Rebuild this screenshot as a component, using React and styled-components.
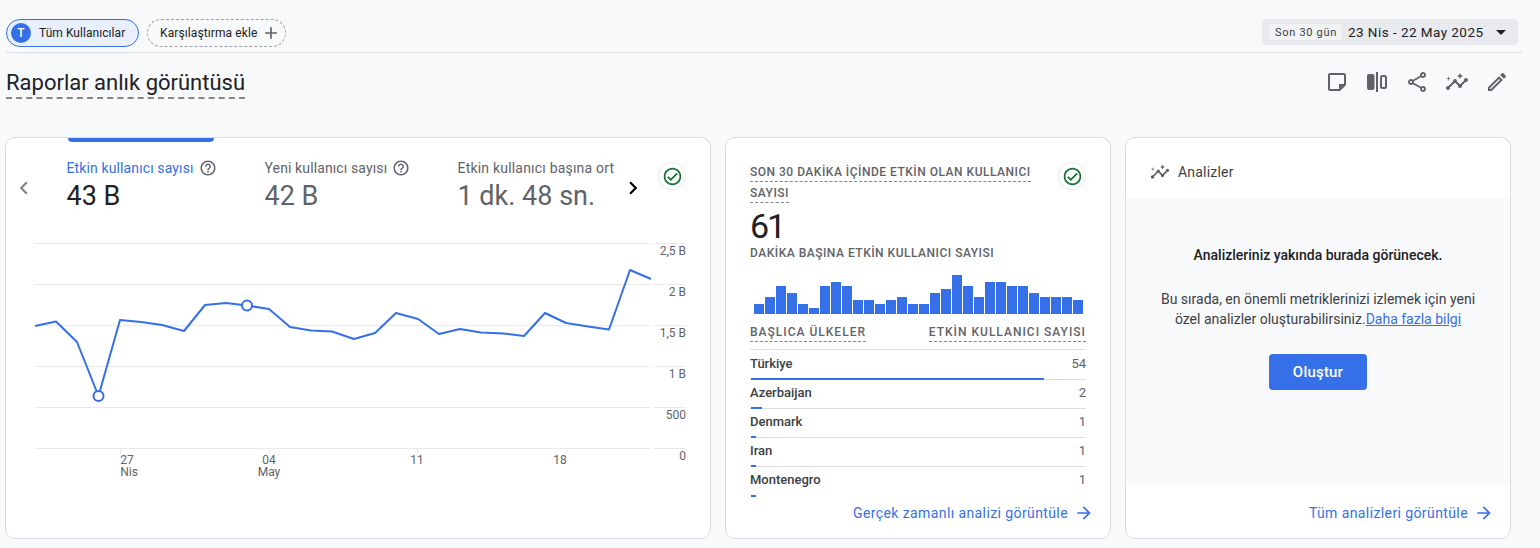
import styled, { createGlobalStyle } from "styled-components"
import {
  MdAdd,
  MdArrowDropDown,
  MdArrowForward,
  MdChevronLeft,
  MdChevronRight,
  MdInsights,
  MdOutlineCheckCircle,
  MdOutlineEdit,
  MdOutlineHelpOutline,
  MdOutlineShare,
} from "react-icons/md"

const BLUE = "#3570e8"
const GREY = "#5f6368"
const INK = "#202124"

const GlobalStyle = createGlobalStyle`
  html, body {
    margin: 0;
    background: #f8f9fb;
    font-family: Roboto, "Liberation Sans", sans-serif;
    color: ${INK};
  }
`

const Page = styled.div`
  width: 1540px;
  height: 548px;
  overflow: hidden;
  box-sizing: border-box;
  padding-top: 19px;
`

const TopBar = styled.div`
  display: flex;
  align-items: flex-start;
  justify-content: space-between;
  width: 1516px;
  height: 34px;
  margin-left: 6px;
  padding-right: 4px;
  box-sizing: border-box;
  border-bottom: 1px solid #dadce0;
`

const Chips = styled.div`
  display: flex;
  gap: 8px;
`

const UserChip = styled.div`
  display: flex;
  align-items: center;
  gap: 8px;
  width: 133px;
  height: 28px;
  box-sizing: border-box;
  padding-left: 4px;
  background: #e8f0fe;
  border: 1px solid ${BLUE};
  border-radius: 14px;
  font-size: 12px;
  letter-spacing: 0.05px;
`

const Avatar = styled.span`
  display: flex;
  align-items: center;
  justify-content: center;
  width: 20px;
  height: 20px;
  border-radius: 50%;
  background: ${BLUE};
  color: #fff;
  font-size: 12px;
  font-weight: 500;
`

const CompareChip = styled.div`
  display: flex;
  align-items: center;
  gap: 4px;
  width: 139px;
  height: 28px;
  box-sizing: border-box;
  padding-left: 12px;
  border: 1px dashed #9aa0a6;
  border-radius: 14px;
  font-size: 12px;
  letter-spacing: 0.1px;
  color: ${GREY};

  span {
    color: ${INK};
  }
`

const DateRange = styled.div`
  display: flex;
  align-items: center;
  width: 256px;
  height: 26px;
  box-sizing: border-box;
  padding-left: 8px;
  background: #e8eaed;
  border-radius: 4px;
  color: ${INK};
`

const DateLabel = styled.span`
  display: flex;
  align-items: center;
  justify-content: center;
  width: 72px;
  height: 16px;
  margin-right: 6px;
  background: #f1f3f4;
  color: #3c4043;
  font-size: 11px;
  letter-spacing: 0.7px;
`

const DateValue = styled.span`
  font-size: 13.5px;
  letter-spacing: 0.45px;
  white-space: nowrap;
`

const Caret = styled.span`
  display: flex;
  margin-left: 6px;
  font-size: 24px;
`

const TitleRow = styled.div`
  display: flex;
  align-items: flex-start;
  justify-content: space-between;
  height: 84px;
  margin-left: 6px;
  width: 1503px;
`

const Title = styled.h1`
  margin: 15px 0 0;
  font-size: 22px;
  font-weight: 400;
  line-height: 29px;
  border-bottom: 2px dashed #80868b;
`

const Actions = styled.div`
  display: flex;
  gap: 16px;
  margin-top: 17px;
  color: ${GREY};
  font-size: 24px;

  svg {
    display: block;
  }
`

const Cards = styled.div`
  display: flex;
  gap: 14px;
  margin-left: 5px;
`

const Card = styled.section`
  position: relative;
  display: flex;
  flex-direction: column;
  width: ${(p) => p.$width}px;
  height: 402px;
  box-sizing: border-box;
  background: #fff;
  border: 1px solid #dadce0;
  border-radius: 10px;
  overflow: hidden;
`

const MetricsHeader = styled.div`
  display: flex;
  align-items: flex-start;
  height: 100px;
`

const Nav = styled.span`
  display: flex;
  flex: none;
  justify-content: ${(p) => (p.$left ? "flex-start" : "center")};
  width: ${(p) => (p.$left ? "60.5px" : "26px")};
  padding-left: ${(p) => (p.$left ? "4.5px" : "0")};
  margin-top: 37px;
  box-sizing: border-box;
  font-size: 26px;
  color: ${(p) => (p.$left ? "#80868b" : "#000")};
`

const Metric = styled.div`
  position: relative;
  width: ${(p) => p.$width}px;
  flex: none;
  padding-top: 21px;
  color: ${(p) => (p.$active ? INK : GREY)};

  &::before {
    content: "";
    display: ${(p) => (p.$active ? "block" : "none")};
    position: absolute;
    top: -1px;
    left: 1px;
    width: 146px;
    height: 5px;
    background: ${BLUE};
    border-radius: 0 0 4px 4px;
  }
`

const MetricLabel = styled.div`
  display: flex;
  align-items: center;
  gap: 5px;
  height: 18px;
  font-size: 14px;
  letter-spacing: ${(p) => (p.$wide ? "0.2px" : "0.12px")};
  white-space: nowrap;
  color: ${(p) => (p.$active ? BLUE : GREY)};

  svg {
    color: ${GREY};
    font-size: 18px;
  }
`

const MetricValue = styled.div`
  margin-top: 1px;
  font-size: 27px;
  line-height: 36px;
  white-space: nowrap;
`

const Badge = styled.span`
  display: flex;
  align-items: center;
  justify-content: center;
  flex: none;
  width: 28px;
  height: 28px;
  box-sizing: border-box;
  margin: ${(p) => p.$margin};
  background: #fff;
  border: 1px solid #e8eaed;
  border-radius: 50%;
  color: #137333;
  font-size: 21px;
`

const RealtimeBody = styled.div`
  flex: none;
  padding: 24px 24px 0;
`

const RealtimeTop = styled.div`
  display: flex;
  justify-content: space-between;
`

const Caps = styled.span`
  font-size: 12px;
  font-weight: 500;
  line-height: 21px;
  letter-spacing: ${(p) => p.$spacing}px;
  color: ${GREY};
  white-space: ${(p) => (p.$wrap ? "normal" : "nowrap")};
`

const DashedCaps = styled(Caps)`
  padding-bottom: 2px;
  border-bottom: 1px dashed #80868b;
`

const MinuteLabel = styled(Caps)`
  display: block;
`

const RealtimeTitle = styled.div`
  width: 290px;
  font-size: 12px;
  line-height: 21px;
`

const BigNumber = styled.div`
  margin-top: 6px;
  font-size: 34px;
  line-height: 33px;
  letter-spacing: -2px;
`

const Bars = styled.div`
  display: flex;
  align-items: flex-end;
  gap: 1px;
  height: 40px;
  margin: 10px 0 0 4px;
`

const Bar = styled.span`
  width: 10px;
  background: ${BLUE};
`

const TableHead = styled.div`
  display: flex;
  justify-content: space-between;
  height: 28px;
  margin: 8px 0 1px;
  box-sizing: border-box;
  font-size: 12px;
  line-height: 21px;
  border-bottom: 1px solid #dadce0;
`

const Row = styled.div`
  position: relative;
  display: flex;
  justify-content: space-between;
  height: 29px;
  box-sizing: border-box;
  padding-top: 5px;
  font-size: 13px;
  line-height: 16px;
  border-bottom: ${(p) => (p.$last ? "none" : "1px solid #dadce0")};
`

const RowName = styled.span`
  font-weight: 500;
  color: #3c4043;
`

const RowValue = styled.span`
  color: ${GREY};
`

const RowBar = styled.span`
  position: absolute;
  left: 1px;
  bottom: -1px;
  height: 2px;
  background: ${BLUE};
`

const FooterLink = styled.a`
  display: flex;
  align-items: center;
  justify-content: flex-end;
  gap: 6px;
  height: ${(p) => p.$height}px;
  padding-right: 16px;
  box-sizing: border-box;
  flex: none;
  color: ${BLUE};
  font-size: 14px;
  letter-spacing: 0.4px;

  svg {
    font-size: 20px;
  }
`

const InsightsHead = styled.div`
  display: flex;
  align-items: center;
  gap: 8px;
  height: 60px;
  flex: none;
  padding: 8px 0 0 24px;
  box-sizing: border-box;
  font-size: 14px;
  letter-spacing: 0.2px;
  color: #3c4043;

  svg {
    font-size: 20px;
    color: ${GREY};
  }
`

const InsightsBody = styled.div`
  display: flex;
  flex-direction: column;
  align-items: center;
  flex: none;
  height: 287px;
  padding-top: 47px;
  box-sizing: border-box;
  background: #f8f9fb;
  text-align: center;
`

const InsightsTitle = styled.div`
  font-size: 14px;
  font-weight: 500;
  line-height: 20px;
`

const InsightsText = styled.p`
  margin: 24px 0 0;
  width: 330px;
  font-size: 14px;
  line-height: 20px;
  color: #3c4043;

  a {
    color: ${BLUE};
    text-decoration: underline;
  }
`

const CreateButton = styled.button`
  width: 98px;
  height: 36px;
  margin-top: 25px;
  border: 0;
  border-radius: 4px;
  background: ${BLUE};
  color: #fff;
  font-family: inherit;
  font-size: 15px;
  letter-spacing: 0.2px;
  font-weight: 500;
`

const ChartSvg = styled.svg`
  display: block;
  flex: none;

  text {
    font-family: Roboto, "Liberation Sans", sans-serif;
    font-size: 12px;
    fill: ${GREY};
  }
`

const LINE = [
  [35, 326], [56, 321.5], [77, 342], [98.5, 396], [120, 320], [141, 322], [162, 325], [184, 331],
  [205, 305], [226, 303], [247, 305.5], [269, 309], [290, 327], [311, 330.5], [332, 331.5], [354, 339],
  [375, 333], [396, 313], [418, 319], [439, 334], [460, 329], [481, 332.5], [503, 333.5], [524, 336],
  [545, 313], [566, 323], [588, 326.5], [609, 329.5], [630, 270], [651, 279],
]
const GRID = [
  [243, "2,5 B"], [284, "2 B"], [325, "1,5 B"], [366, "1 B"], [407, "500"], [448, "0"],
]
const TICKS = [
  [120, "27", "Nis", 127, 129],
  [269, "04", "May", 269, 269],
  [417, "11", null, 417, 0],
  [566, "18", null, 560, 0],
]
const BARS = [10, 17, 28, 21, 10, 6, 28, 32, 28, 14, 14, 10, 14, 17, 10, 10, 21, 25, 39, 28, 17, 32, 32, 28, 28, 21, 17, 17, 17, 14]
const COUNTRIES = [
  ["Türkiye", 54, 293],
  ["Azerbaijan", 2, 11],
  ["Denmark", 1, 5],
  ["Iran", 1, 5],
  ["Montenegro", 1, 5],
]

const NoteIcon = () => (
  <svg width="24" height="24" viewBox="0 0 24 24" fill="#5f6368">
    <path d="M19 5v9h-5v5H5V5h14m0-2H5c-1.1 0-2 .9-2 2v14c0 1.1.9 2 2 2h10l6-6V5c0-1.1-.9-2-2-2z" />
  </svg>
)

const CompareIcon = () => (
  <svg width="24" height="24" viewBox="0 0 24 24" fill="#5f6368">
    <rect x="2" y="4" width="7.5" height="16" rx="2" />
    <rect x="11" y="2" width="2" height="20" />
    <rect x="16" y="6" width="5" height="12" rx="1.5" fill="none" stroke="#5f6368" strokeWidth="2" />
  </svg>
)

const Chart = () => (
  <ChartSvg width="704" height="300" viewBox="6 238 704 300">
    {GRID.map(([y, label]) => (
      <g key={y}>
        <line x1="35" x2="651" y1={y + 0.5} y2={y + 0.5} stroke="#e8eaed" />
        <line x1="655" x2="685" y1={y + 0.5} y2={y + 0.5} stroke="#e8eaed" />
        <text x="686" y={y + 12} textAnchor="end">{label}</text>
      </g>
    ))}
    {TICKS.map(([x, day, month, dayX, monthX]) => (
      <g key={day}>
        <line x1={x + 0.5} x2={x + 0.5} y1="448" y2="454" stroke="#e8eaed" />
        <text x={dayX} y="464" textAnchor="middle">{day}</text>
        {month && <text x={monthX} y="476" textAnchor="middle">{month}</text>}
      </g>
    ))}
    <polyline
      points={LINE.map((p) => p.join(",")).join(" ")}
      fill="none"
      stroke={BLUE}
      strokeWidth="2"
      strokeLinejoin="round"
    />
    <circle cx="98.5" cy="396" r="5" fill="#fff" stroke={BLUE} strokeWidth="2" />
    <circle cx="247" cy="305.5" r="5" fill="#fff" stroke={BLUE} strokeWidth="2" />
  </ChartSvg>
)

const App = () => {
  return (
    <Page>
      <GlobalStyle />
      <TopBar>
        <Chips>
          <UserChip><Avatar>T</Avatar>Tüm Kullanıcılar</UserChip>
          <CompareChip><span>Karşılaştırma ekle</span><MdAdd size={20} /></CompareChip>
        </Chips>
        <DateRange>
          <DateLabel>Son 30 gün</DateLabel>
          <DateValue>23 Nis - 22 May 2025</DateValue>
          <Caret><MdArrowDropDown /></Caret>
        </DateRange>
      </TopBar>

      <TitleRow>
        <Title>Raporlar anlık görüntüsü</Title>
        <Actions>
          <NoteIcon />
          <CompareIcon />
          <MdOutlineShare />
          <MdInsights />
          <MdOutlineEdit />
        </Actions>
      </TitleRow>

      <Cards>
        <Card $width={706}>
          <MetricsHeader>
            <Nav $left><MdChevronLeft /></Nav>
            <Metric $width={198} $active>
              <MetricLabel $active>Etkin kullanıcı sayısı <MdOutlineHelpOutline /></MetricLabel>
              <MetricValue>43 B</MetricValue>
            </Metric>
            <Metric $width={193}>
              <MetricLabel>Yeni kullanıcı sayısı <MdOutlineHelpOutline /></MetricLabel>
              <MetricValue>42 B</MetricValue>
            </Metric>
            <Metric $width={162}>
              <MetricLabel $wide>Etkin kullanıcı başına ort</MetricLabel>
              <MetricValue>1 dk. 48 sn.</MetricValue>
            </Metric>
            <Nav><MdChevronRight /></Nav>
            <Badge $margin="24px 0 0 12.5px"><MdOutlineCheckCircle /></Badge>
          </MetricsHeader>
          <Chart />
        </Card>

        <Card $width={386}>
          <RealtimeBody>
            <RealtimeTop>
              <RealtimeTitle>
                <DashedCaps $wrap $spacing={0.5}>SON 30 DAKİKA İÇİNDE ETKİN OLAN KULLANICI SAYISI</DashedCaps>
              </RealtimeTitle>
              <Badge $margin="0"><MdOutlineCheckCircle /></Badge>
            </RealtimeTop>
            <BigNumber>61</BigNumber>
            <MinuteLabel $spacing={0.5}>DAKİKA BAŞINA ETKİN KULLANICI SAYISI</MinuteLabel>
            <Bars>
              {BARS.map((h, i) => <Bar key={i} style={{ height: h }} />)}
            </Bars>
            <TableHead>
              <div><DashedCaps $spacing={1}>BAŞLICA ÜLKELER</DashedCaps></div>
              <div><DashedCaps $spacing={1}>ETKİN KULLANICI SAYISI</DashedCaps></div>
            </TableHead>
            {COUNTRIES.map(([name, value, width], i) => (
              <Row key={name} $last={i === COUNTRIES.length - 1}>
                <RowName>{name}</RowName>
                <RowValue>{value}</RowValue>
                <RowBar style={{ width }} />
              </Row>
            ))}
          </RealtimeBody>
          <FooterLink $height={34}>Gerçek zamanlı analizi görüntüle <MdArrowForward /></FooterLink>
        </Card>

        <Card $width={386}>
          <InsightsHead><MdInsights />Analizler</InsightsHead>
          <InsightsBody>
            <InsightsTitle>Analizleriniz yakında burada görünecek.</InsightsTitle>
            <InsightsText>
              Bu sırada, en önemli metriklerinizi izlemek için yeni özel analizler oluşturabilirsiniz.<a>Daha fazla bilgi</a>
            </InsightsText>
            <CreateButton>Oluştur</CreateButton>
          </InsightsBody>
          <FooterLink $height={55}>Tüm analizleri görüntüle <MdArrowForward /></FooterLink>
        </Card>
      </Cards>
    </Page>
  )
}

export default App
